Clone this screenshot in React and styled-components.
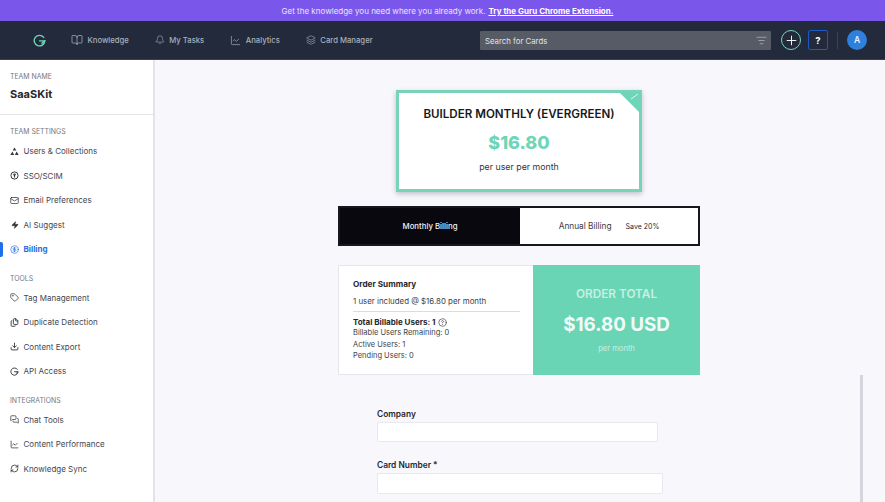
import styled, { createGlobalStyle } from "styled-components";
import {
  BookOpen, Bell, ChartLine, Layers, Plus, ListFilter, Mail, Zap, CircleDollarSign, Tag,
  Files, Download, MessagesSquare, RefreshCw, CircleHelp,
} from "lucide-react";

const GlobalStyle = createGlobalStyle`
  * { box-sizing: border-box; }
  html, body { margin: 0; height: 100%; overflow: hidden; }
  body { font-family: "Inter", "Liberation Sans", sans-serif; color: #2a2d34; }
`;

function GuruMark({ size = 13, color = "#6fd5b8" }) {
  return (
    <svg width={size} height={size} viewBox="0 0 16 16" fill="none" stroke={color} strokeWidth="1.7" strokeLinecap="round">
      <path d="M13.2 4.2A6.5 6.5 0 1 0 14.5 8.6" />
      <path d="M8 8.4h6.2L11 11.4" />
    </svg>
  );
}

function UsersGlyph() {
  return (
    <svg width="9" height="9" viewBox="0 0 10 10" fill="currentColor">
      <path d="M5 .6 7 3.8H3z" />
      <path d="M2.6 5 4.6 9H.4z" />
      <path d="M7.4 5 9.6 9H5.4z" />
    </svg>
  );
}

function SsoGlyph() {
  return (
    <svg width="9" height="9" viewBox="0 0 10 10">
      <circle cx="5" cy="5" r="4" fill="none" stroke="currentColor" strokeWidth="1.1" />
      <circle cx="5" cy="4" r="1.3" fill="currentColor" />
      <rect x="4.4" y="4.5" width="1.2" height="2.8" fill="currentColor" />
    </svg>
  );
}

const navItems = [
  { label: "Knowledge", icon: BookOpen, size: 12 },
  { label: "My Tasks", icon: Bell, size: 10 },
  { label: "Analytics", icon: ChartLine, size: 11 },
  { label: "Card Manager", icon: Layers, size: 10 },
];

const sections = [
  {
    title: "TEAM SETTINGS",
    items: [
      { label: "Users & Collections", glyph: <UsersGlyph /> },
      { label: "SSO/SCIM", glyph: <SsoGlyph /> },
      { label: "Email Preferences", glyph: <Mail size={9} strokeWidth={2} /> },
      { label: "AI Suggest", glyph: <Zap size={8} strokeWidth={1.5} fill="currentColor" /> },
      { label: "Billing", glyph: <CircleDollarSign size={9} strokeWidth={1.7} />, active: true },
    ],
  },
  {
    title: "TOOLS",
    items: [
      { label: "Tag Management", glyph: <Tag size={9} strokeWidth={2} /> },
      { label: "Duplicate Detection", glyph: <Files size={9} strokeWidth={2.4} /> },
      { label: "Content Export", glyph: <Download size={9} strokeWidth={2.4} /> },
      { label: "API Access", glyph: <GuruMark size={9} color="#3a3d45" /> },
    ],
  },
  {
    title: "INTEGRATIONS",
    items: [
      { label: "Chat Tools", glyph: <MessagesSquare size={9} strokeWidth={2} /> },
      { label: "Content Performance", glyph: <ChartLine size={9} strokeWidth={2} /> },
      { label: "Knowledge Sync", glyph: <RefreshCw size={9} strokeWidth={2.2} /> },
    ],
  },
];

export default function App() {
  return (
    <Page>
      <GlobalStyle />
      <Banner>
        <span>Get the knowledge you need where you already work.</span>
        <BannerLink>Try the Guru Chrome Extension.</BannerLink>
      </Banner>
      <Header>
        <Logo><GuruMark /></Logo>
        <TopNav>
          {navItems.map(({ label, icon: Icon, size }) => (
            <TopNavItem key={label}>
              <IconSlot><Icon size={size} strokeWidth={1.4} /></IconSlot>
              {label}
            </TopNavItem>
          ))}
        </TopNav>
        <Search>
          <span>Search for Cards</span>
          <ListFilter size={11} strokeWidth={1.5} color="#b9bdc6" />
        </Search>
        <AddButton><Plus size={15} strokeWidth={1.5} /></AddButton>
        <HelpButton>?</HelpButton>
        <HeaderDivider />
        <Avatar>A</Avatar>
      </Header>
      <Body>
        <Sidebar>
          <TeamBlock>
            <SectionTitle>TEAM NAME</SectionTitle>
            <TeamName>SaaSKit</TeamName>
          </TeamBlock>
          {sections.map((section) => (
            <Section key={section.title}>
              <SectionTitle>{section.title}</SectionTitle>
              <ItemList>
                {section.items.map(({ label, glyph, active }) => (
                  <SideItem key={label} $active={active}>
                    <SideIcon $active={active}>{glyph}</SideIcon>
                    {label}
                  </SideItem>
                ))}
              </ItemList>
            </Section>
          ))}
        </Sidebar>
        <Main>
          <Column>
            <PlanCard>
              <PlanTitle>BUILDER MONTHLY (EVERGREEN)</PlanTitle>
              <PlanPrice>$16.80</PlanPrice>
              <PlanNote>per user per month</PlanNote>
              <CardCorner viewBox="0 0 21 21">
                <path d="M0 0H21V21Z" fill="#6fd5b8" />
                <path d="M12 7 19 2" stroke="#d8f5ec" strokeWidth="1" />
              </CardCorner>
            </PlanCard>
            <Toggle>
              <ToggleSide $selected>Monthly Billing</ToggleSide>
              <ToggleSide>
                Annual Billing
                <Save>Save 20%</Save>
              </ToggleSide>
            </Toggle>
            <Order>
              <Summary>
                <SummaryTitle>Order Summary</SummaryTitle>
                <SummaryLine>1 user included @ $16.80 per month</SummaryLine>
                <SummaryRule />
                <BillableTitle>
                  Total Billable Users: 1
                  <CircleHelp size={9} strokeWidth={1.6} />
                </BillableTitle>
                <BillableRow>Billable Users Remaining: 0</BillableRow>
                <BillableRow>Active Users: 1</BillableRow>
                <BillableRow>Pending Users: 0</BillableRow>
              </Summary>
              <Total>
                <TotalTitle>ORDER TOTAL</TotalTitle>
                <TotalPrice>$16.80 USD</TotalPrice>
                <TotalNote>per month</TotalNote>
              </Total>
            </Order>
            <Form>
              <Field>
                <FieldLabel>Company</FieldLabel>
                <FieldInput $width={281} $height={20} />
              </Field>
              <Field>
                <FieldLabel>Card Number *</FieldLabel>
                <FieldInput $width={286} $height={21} />
              </Field>
            </Form>
          </Column>
          <ScrollThumb />
        </Main>
      </Body>
    </Page>
  );
}

const Page = styled.div`
  display: flex;
  flex-direction: column;
  height: 502px;
  width: 885px;
  overflow: hidden;
`;

const Banner = styled.div`
  height: 21px;
  flex: none;
  display: flex;
  align-items: center;
  justify-content: center;
  gap: 3px;
  background: #7a57ea;
  color: #e9e3fc;
  font-size: 8px;
  padding-left: 10px;
`;

const BannerLink = styled.a`
  color: #fff;
  font-weight: 700;
  text-decoration: underline;
`;

const Header = styled.header`
  height: 39px;
  flex: none;
  display: flex;
  align-items: center;
  background: #222a3b;
  border-bottom: 1px solid #3a404c;
  color: #adb1ba;
`;

const Logo = styled.div`
  display: flex;
  margin-left: 33px;
  width: 38px;
`;

const TopNav = styled.nav`
  display: flex;
  align-items: center;
  width: 409px;
`;

const TopNavItem = styled.div`
  display: flex;
  align-items: center;
  gap: 4.5px;
  font-size: 7.7px;
  font-weight: 500;
  margin-right: 26px;
`;

const IconSlot = styled.span`
  display: flex;
  color: #b4b8c0;
`;

const Search = styled.div`
  width: 291px;
  height: 19px;
  flex: none;
  display: flex;
  align-items: center;
  justify-content: space-between;
  padding: 0 4px 0 5px;
  margin: 1px 10px 0 0;
  background: #565b66;
  border-radius: 1px;
  color: #e2e4e8;
  font-size: 7.8px;
`;

const AddButton = styled.div`
  width: 20px;
  height: 20px;
  flex: none;
  display: flex;
  align-items: center;
  justify-content: center;
  margin-right: 7px;
  border: 1px solid #79d3c0;
  border-radius: 50%;
  color: #fff;
`;

const HelpButton = styled.div`
  width: 20px;
  height: 20px;
  flex: none;
  display: flex;
  align-items: center;
  justify-content: center;
  margin-right: 9px;
  border: 1px solid #1d59c4;
  border-radius: 2px;
  color: #fff;
  font-size: 9.5px;
  font-weight: 700;
`;

const HeaderDivider = styled.div`
  width: 1px;
  height: 17px;
  margin-right: 9px;
  background: #3b4250;
`;

const Avatar = styled.div`
  width: 20px;
  height: 20px;
  flex: none;
  display: flex;
  align-items: center;
  justify-content: center;
  border-radius: 50%;
  background: #2f7fdc;
  color: #e8f2fd;
  font-size: 8.5px;
  font-weight: 600;
`;

const Body = styled.div`
  flex: 1;
  display: flex;
  min-height: 0;
`;

const Sidebar = styled.aside`
  width: 155px;
  flex: none;
  background: #fff;
  border-right: 2px solid #e3e3ea;
  padding-top: 12px;
`;

const TeamBlock = styled.div`
  padding: 0 10px;
  margin-bottom: 12px;
  height: 43px;
  border-bottom: 1px solid #e3e3e8;
`;

const SectionTitle = styled.div`
  font-size: 6.9px;
  line-height: 9px;
  color: #75787e;
`;

const TeamName = styled.div`
  margin-top: 6px;
  font-size: 11px;
  line-height: 14px;
  font-weight: 700;
  color: #26282e;
`;

const Section = styled.section`
  padding-left: 10px;
  margin-bottom: 12px;
`;

const ItemList = styled.div`
  display: flex;
  flex-direction: column;
  margin-top: 3px;
`;

const SideItem = styled.div`
  position: relative;
  height: 24.5px;
  display: flex;
  align-items: center;
  gap: 4.5px;
  font-size: 8px;
  font-weight: ${(p) => (p.$active ? 700 : 400)};
  color: ${(p) => (p.$active ? "#2a6be0" : "#44474e")};

  &::before {
    content: "";
    display: ${(p) => (p.$active ? "block" : "none")};
    position: absolute;
    left: -10px;
    top: 5px;
    width: 3px;
    height: 15px;
    border-radius: 0 2px 2px 0;
    background: #1f6fec;
  }
`;

const SideIcon = styled.span`
  width: 9px;
  display: flex;
  justify-content: center;
  color: ${(p) => (p.$active ? "#2a6be0" : "#33363c")};
`;

const Main = styled.main`
  position: relative;
  flex: 1;
  background: #f7f7fc;
  overflow: hidden;
  padding-left: 183px;
`;

const Column = styled.div`
  width: 362px;
  padding-top: 30px;
  display: flex;
  flex-direction: column;
`;

const PlanCard = styled.div`
  position: relative;
  width: 246px;
  height: 102px;
  flex: none;
  align-self: center;
  display: flex;
  flex-direction: column;
  align-items: center;
  padding-top: 14px;
  background: #fff;
  border: 3px solid #79d3b9;
  box-shadow: 0 2px 5px rgba(60, 70, 90, 0.3);
`;

const CardCorner = styled.svg`
  position: absolute;
  top: -1px;
  right: -1px;
  width: 21px;
  height: 21px;
`;

const PlanTitle = styled.div`
  font-size: 11.6px;
  line-height: 14px;
  font-weight: 600;
  color: #17181c;
`;

const PlanPrice = styled.div`
  margin-top: 10px;
  font-size: 18px;
  line-height: 24px;
  font-weight: 800;
  color: #6fd5b8;
`;

const PlanNote = styled.div`
  margin-top: 6px;
  font-size: 8.8px;
  line-height: 11px;
  color: #33363c;
`;

const Toggle = styled.div`
  height: 40px;
  flex: none;
  margin-top: 14px;
  display: grid;
  grid-template-columns: 180px 1fr;
  border: 2px solid #16171f;
  background: #fff;
`;

const ToggleSide = styled.div`
  display: flex;
  align-items: center;
  justify-content: center;
  gap: 14px;
  background: ${(p) => (p.$selected ? "#08080e" : "#fff")};
  color: ${(p) => (p.$selected ? "#f2f2f2" : "#3a3d44")};
  font-size: ${(p) => (p.$selected ? "7.8px" : "8.3px")};
  font-weight: ${(p) => (p.$selected ? 500 : 400)};
`;

const Save = styled.span`
  font-size: 7px;
  color: #26282e;
`;

const Order = styled.div`
  height: 110px;
  flex: none;
  margin-top: 19px;
  display: grid;
  grid-template-columns: 195px 1fr;
`;

const Summary = styled.div`
  display: flex;
  flex-direction: column;
  padding: 13px 13px 0 14px;
  background: #fff;
  border: 1px solid #e6e6ec;
  border-right: none;
`;

const SummaryTitle = styled.div`
  font-size: 8.2px;
  line-height: 10px;
  font-weight: 700;
  color: #26282e;
`;

const SummaryLine = styled.div`
  margin-top: 7px;
  font-size: 7.9px;
  line-height: 10px;
  color: #3c3f46;
`;

const SummaryRule = styled.div`
  height: 1px;
  margin-top: 5px;
  background: #dcdce0;
`;

const BillableTitle = styled.div`
  display: flex;
  align-items: center;
  gap: 3px;
  margin-top: 5px;
  font-size: 8px;
  line-height: 10px;
  font-weight: 700;
  color: #26282e;
`;

const BillableRow = styled.div`
  font-size: 7.5px;
  line-height: 11.6px;
  color: #3c3f46;
`;

const Total = styled.div`
  display: flex;
  flex-direction: column;
  align-items: center;
  padding-top: 23px;
  background: #69d5b5;
`;

const TotalTitle = styled.div`
  font-size: 11.8px;
  line-height: 13px;
  font-weight: 600;
  color: #c8f0e2;
`;

const TotalPrice = styled.div`
  margin-top: 13px;
  font-size: 18.8px;
  line-height: 22px;
  font-weight: 700;
  color: #f1fbf8;
`;

const TotalNote = styled.div`
  margin-top: 8px;
  font-size: 7.6px;
  line-height: 10px;
  color: #c8f0e2;
`;

const Form = styled.div`
  display: flex;
  flex-direction: column;
  gap: 18px;
  margin-top: 34px;
  padding-left: 39px;
`;

const Field = styled.div`
  display: flex;
  flex-direction: column;
  gap: 3px;
`;

const FieldLabel = styled.div`
  font-size: 8.4px;
  line-height: 10px;
  font-weight: 600;
  color: #26282e;
`;

const FieldInput = styled.div`
  width: ${(p) => p.$width}px;
  height: ${(p) => p.$height}px;
  background: #fff;
  border: 1px solid #e8e8ee;
  border-radius: 2px;
`;

const ScrollThumb = styled.div`
  position: absolute;
  left: 705px;
  top: 315px;
  bottom: 0;
  width: 3px;
  background: #d5d5de;
`;
